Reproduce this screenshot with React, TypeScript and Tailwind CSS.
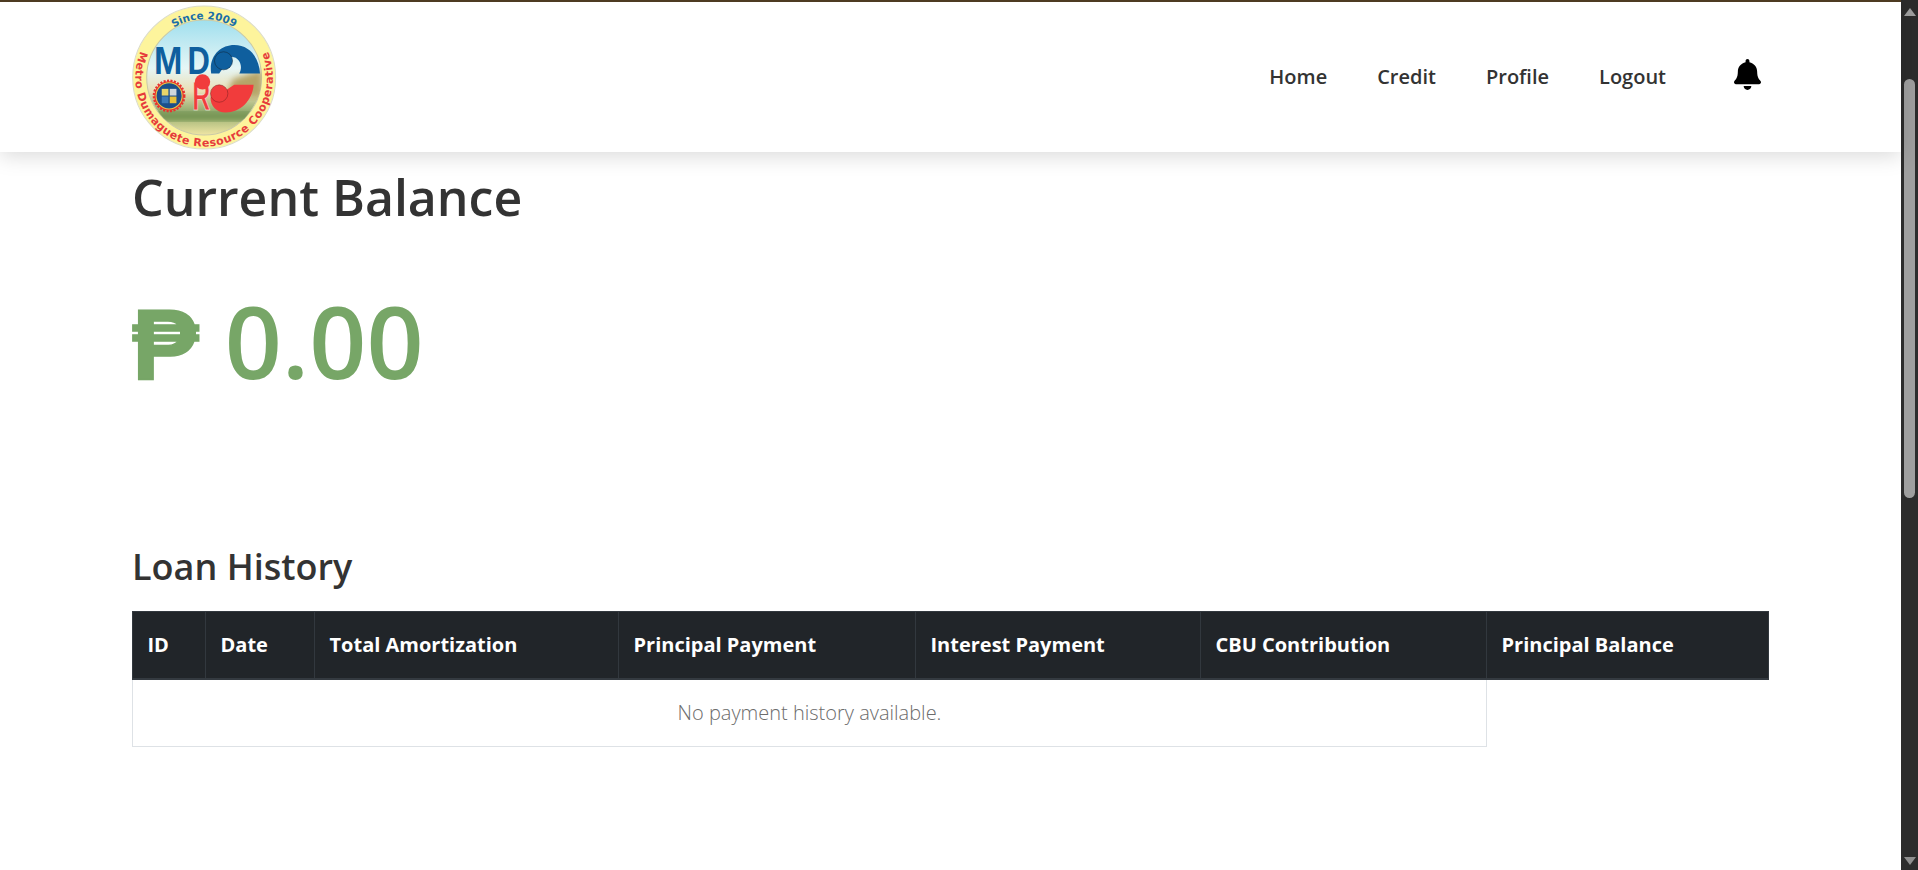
import React from 'react';
import { FaBell } from 'react-icons/fa';

const navLinks = ['Home', 'Credit', 'Profile', 'Logout'];

const columns = [
  { label: 'ID', width: 'w-[73px]' },
  { label: 'Date', width: 'w-[109px]' },
  { label: 'Total Amortization', width: 'w-[304px]' },
  { label: 'Principal Payment', width: 'w-[297px]' },
  { label: 'Interest Payment', width: 'w-[285px]' },
  { label: 'CBU Contribution', width: 'w-[286px]' },
  { label: 'Principal Balance', width: 'w-[282px]' },
];

const Logo: React.FC = () => (
  <svg viewBox="36 10 440 440" className="w-[147px] h-[147px] shrink-0 -translate-x-px">
    <defs>
      <linearGradient id="scene" x1="0" y1="0" x2="0" y2="1">
        <stop offset="0" stopColor="#9fdfee" />
        <stop offset="0.42" stopColor="#e6f6f6" />
        <stop offset="0.62" stopColor="#eadfb4" />
        <stop offset="0.8" stopColor="#8fa96c" />
        <stop offset="1" stopColor="#efe5a4" />
      </linearGradient>
      <filter id="soft">
        <feGaussianBlur stdDeviation="9" />
      </filter>
      <clipPath id="sceneClip">
        <circle cx="255" cy="230" r="172" />
      </clipPath>
      <path id="topArc" d="M80 230 A175 175 0 0 1 430 230" />
      <path id="ringArc" d="M77 127 A206 206 0 1 0 433 127" />
    </defs>
    <circle cx="255" cy="230" r="214" fill="#fdf49c" stroke="#dcdcc8" strokeWidth="3" />
    <circle cx="255" cy="230" r="172" fill="url(#scene)" stroke="#c9c9a8" strokeWidth="3" />
    <g clipPath="url(#sceneClip)">
      <path d="M340 235 L430 205 L430 290 L320 290 Z" fill="#b5a468" filter="url(#soft)" />
      <rect x="110" y="335" width="290" height="24" fill="#6f9150" filter="url(#soft)" />
    </g>
    <text fill="#1a6ea8" fontSize="31" fontWeight="700" fontFamily="'DejaVu Sans', sans-serif">
      <textPath href="#topArc" startOffset="50%" textAnchor="middle">Since 2009</textPath>
    </text>
    <text fill="#e63b3b" fontSize="33" fontWeight="700" fontFamily="'DejaVu Sans', sans-serif" letterSpacing="1.5">
      <textPath href="#ringArc" startOffset="50%" textAnchor="middle">Metro Dumaguete Resource Cooperative</textPath>
    </text>
    <text x="105" y="220" fill="#0f5f9e" fontSize="116" fontWeight="700" textLength="85" lengthAdjust="spacingAndGlyphs" fontFamily="'Liberation Sans', sans-serif">M</text>
    <text x="205" y="220" fill="#0f5f9e" fontSize="116" fontWeight="700" textLength="67" lengthAdjust="spacingAndGlyphs" fontFamily="'Liberation Sans', sans-serif">D</text>
    <path d="M276 218 C268 165 305 133 345 133 C392 133 420 172 422 218 L360 218 C372 198 362 170 338 168 C318 190 310 205 300 218 Z" fill="#0f5f9e" />
    <circle cx="313" cy="180" r="27" fill="#0f5f9e" stroke="#123" strokeWidth="1.5" />
    <text x="219" y="326" fill="#f13c3c" stroke="#fff" strokeWidth="1.5" fontSize="122" fontWeight="700" textLength="54" lengthAdjust="spacingAndGlyphs" fontFamily="'Liberation Sans', sans-serif">R</text>
    <circle cx="250" cy="243" r="23" fill="#f13c3c" />
    <path d="M345 252 L403 252 C400 300 362 335 320 335 C292 335 274 316 274 290 L320 268 Z" fill="#f13c3c" />
    <circle cx="300" cy="278" r="26" fill="#f13c3c" stroke="#7a2020" strokeWidth="1.5" />
    <circle cx="150" cy="285" r="44" fill="#e8332f" stroke="#e8332f" strokeWidth="10" strokeDasharray="6 4" />
    <circle cx="150" cy="285" r="39" fill="#1b4f8a" stroke="#e5c94a" strokeWidth="3" />
    <rect x="128" y="264" width="20" height="20" fill="#e8d56a" />
    <rect x="152" y="264" width="20" height="20" fill="#cfd8dc" />
    <rect x="128" y="287" width="20" height="20" fill="#3d7ab8" />
    <rect x="152" y="287" width="20" height="20" fill="#e8c23a" />
  </svg>
);

const App: React.FC = () => {
  return (
    <div className="flex h-[870px] overflow-hidden bg-white font-['Open_Sans',sans-serif] text-[#333]">
      <div className="flex-1 min-w-0 flex flex-col">
        {/* Top bar */}
        <header className="relative z-10 h-[152px] shrink-0 bg-white border-t-2 border-[#4e3b22] shadow-[0_4px_20px_rgba(0,0,0,0.15)]">
          <div className="w-[1637px] mx-auto h-full flex items-center justify-between">
            <Logo />
            <nav className="flex items-center pr-[8px]">
              {navLinks.map((link) => (
                <a key={link} href="#" className="mr-[50px] text-[20px] leading-[30px] font-semibold text-[#333]">
                  {link}
                </a>
              ))}
              <FaBell className="ml-[18px] -mt-[5px] w-[27px] h-[31px] text-black" />
            </nav>
          </div>
        </header>

        <main className="w-[1637px] mx-auto">
          <h1 className="mt-[15px] text-[50px] leading-[60px] font-semibold text-[#333]">Current Balance</h1>
          <p className="mt-[53px] text-[100px] leading-[120px] font-semibold text-[#77a667]">
            <span className="font-bold [-webkit-text-stroke:1.5px_#77a667]">₱</span> 0.00
          </p>
          <h2 className="mt-[145px] text-[36px] leading-[44px] font-semibold text-[#333]">Loan History</h2>

          {/* Loan table */}
          <table className="mt-[22px] w-[1636px] table-fixed border-collapse">
            <thead>
              <tr className="bg-[#212529] text-white">
                {columns.map((col) => (
                  <th
                    key={col.label}
                    className={`${col.width} h-[67px] px-[14.5px] text-left text-[20px] font-bold border border-[#32383e] border-b-2 border-b-[#343a40]`}
                  >
                    {col.label}
                  </th>
                ))}
              </tr>
            </thead>
            <tbody>
              <tr>
                <td colSpan={6} className="h-[68px] text-center text-[20px] font-light text-[#6c6c6c] border border-[#dee2e6]">
                  No payment history available.
                </td>
              </tr>
            </tbody>
          </table>
        </main>
      </div>

      {/* Scrollbar */}
      <div className="w-[17px] shrink-0 bg-[#2c2c2c] flex flex-col items-center">
        <div className="mt-[8px] w-0 h-0 border-x-[6px] border-x-transparent border-b-[8px] border-b-[#9f9f9f]" />
        <div className="mt-[63px] w-[11px] h-[419px] rounded-full bg-[#9f9f9f]" />
        <div className="mt-auto mb-[5px] w-0 h-0 border-x-[6px] border-x-transparent border-t-[8px] border-t-[#8f8f8f]" />
      </div>
    </div>
  );
};

export default App;
